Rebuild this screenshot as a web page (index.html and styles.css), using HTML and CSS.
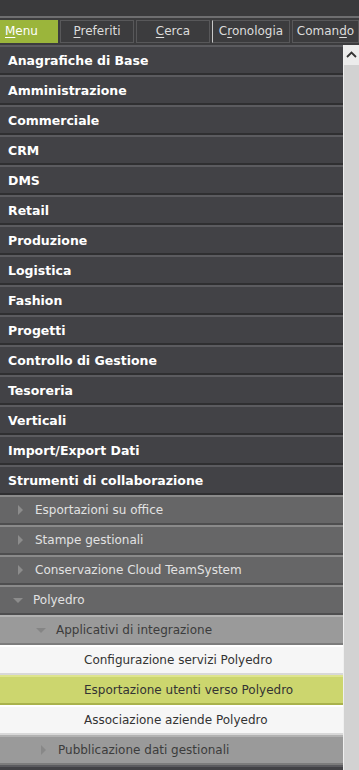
FILE: index.html
```html
<!DOCTYPE html>
<html lang="it">
<head>
  <meta charset="UTF-8" />
  <meta name="viewport" content="width=device-width, initial-scale=1.0"/>
  <title>Menu</title>
  <link rel="stylesheet" href="styles.css">
</head>
<body>
  <div class="top-bar"></div>

  <nav class="tabs">
    <div class="tab active"><u>M</u>enu</div>
    <div class="tab"><u>P</u>referiti</div>
    <div class="tab"><u>C</u>erca</div>
    <div class="tab current">C<u>r</u>onologia</div>
    <div class="tab">Coman<u>d</u>o</div>
  </nav>

  <main class="menu-area">
    <ul class="menu">
      <li class="item">Anagrafiche di Base</li>
      <li class="item">Amministrazione</li>
      <li class="item">Commerciale</li>
      <li class="item">CRM</li>
      <li class="item">DMS</li>
      <li class="item">Retail</li>
      <li class="item">Produzione</li>
      <li class="item">Logistica</li>
      <li class="item">Fashion</li>
      <li class="item">Progetti</li>
      <li class="item">Controllo di Gestione</li>
      <li class="item">Tesoreria</li>
      <li class="item">Verticali</li>
      <li class="item">Import/Export Dati</li>
      <li class="item">Strumenti di collaborazione</li>

      <!-- level 1 -->
      <li class="sub"><span class="arrow right"></span>Esportazioni su office</li>
      <li class="sub"><span class="arrow right"></span>Stampe gestionali</li>
      <li class="sub"><span class="arrow right"></span>Conservazione Cloud TeamSystem</li>
      <li class="sub"><span class="arrow down"></span>Polyedro</li>

      <!-- level 2 -->
      <li class="sub2"><span class="arrow down"></span>Applicativi di integrazione</li>

      <!-- level 3 -->
      <li class="leaf">Configurazione servizi Polyedro</li>
      <li class="leaf selected">Esportazione utenti verso Polyedro</li>
      <li class="leaf">Associazione aziende Polyedro</li>

      <li class="sub2"><span class="arrow right"></span>Pubblicazione dati gestionali</li>
      <li class="item"></li>
    </ul>

    <div class="scrollbar">
      <div class="scroll-btn">
        <svg width="11" height="7" viewBox="0 0 11 7"><path d="M1 6 L5.5 1.5 L10 6" fill="none" stroke="#333" stroke-width="1.8"/></svg>
      </div>
    </div>
  </main>
</body>
</html>
```

FILE: styles.css
```css
* { margin: 0; padding: 0; box-sizing: border-box; }

body {
  font-family: 'DejaVu Sans', Verdana, sans-serif;
  background-color: #3c3c3e;
  width: 359px;
  height: 770px;
  overflow: hidden;
}

.top-bar {
  height: 18px;
  background-color: #3a3a3c;
  border-bottom: 2px solid #6e6e70;
}

.tabs {
  display: flex;
  gap: 2px;
  height: 27px;
  padding-top: 2px;
  border-bottom: 2px solid #3c3c3e;
  background-color: #3c3c3e;
}

.tab {
  height: 23px;
  line-height: 21px;
  font-size: 12px;
  color: #dcdcdc;
  border: 1px solid #58585a;
  text-align: center;
  width: 74px;
}

.tab u { text-underline-offset: 2px; }

.tab.active {
  width: 58px;
  background-color: #9bb53b;
  border-color: #9bb53b;
  color: #fff;
  text-align: left;
  padding-left: 4px;
}

.tab.current {
  width: 78px;
  border-left-color: #c8c8c8;
}

.tab:last-child { flex: 1; }

.menu-area {
  display: flex;
  height: 725px;
  overflow: hidden;
}

.menu {
  list-style: none;
  flex: 1;
}

.menu li {
  height: 30px;
  display: flex;
  align-items: center;
  white-space: nowrap;
}

.item {
  background-color: #424246;
  border-top: 2px solid #5b5b5f;
  border-bottom: 2px solid #2f2f31;
  color: #fff;
  font-weight: bold;
  font-size: 12.5px;
  padding-left: 8px;
}

.sub {
  background-color: #666667;
  border-top: 2px solid #8a8a8a;
  border-bottom: 2px solid #4e4e4f;
  color: #e2e2e2;
  font-size: 12px;
  padding-left: 15px;
}

.sub2 {
  background-color: #9a9a9a;
  border-top: 2px solid #b2b2b2;
  border-bottom: 2px solid #7c7c7c;
  color: #3c3c3c;
  font-size: 12px;
  padding-left: 38px;
}

.leaf {
  background-color: #f6f6f6;
  border-top: 2px solid #fff;
  border-bottom: 2px solid #d8d8d8;
  color: #333;
  font-size: 12px;
  padding-left: 84px;
}

.leaf.selected {
  background-color: #ccd66e;
  border-top-color: #dde48e;
  border-bottom-color: #a9b24c;
}

.arrow {
  display: inline-block;
  width: 0;
  height: 0;
  margin-right: 12px;
}

.arrow.right {
  border-top: 5px solid transparent;
  border-bottom: 5px solid transparent;
  border-left: 5px solid #8c8c8c;
  margin-left: 3px;
  margin-right: 12px;
}

.sub2 .arrow.right { border-left-color: #888; }

.arrow.down {
  border-left: 5px solid transparent;
  border-right: 5px solid transparent;
  border-top: 5px solid #8c8c8c;
  margin-left: -2px;
  margin-right: 10px;
}

.sub2 .arrow.down { border-top-color: #858585; }

.scrollbar {
  width: 16px;
  background-color: #d2d2d2;
  border-left: 1px solid #f0f0f0;
}

.scroll-btn {
  height: 20px;
  background-color: #ececec;
  display: flex;
  justify-content: center;
  padding-top: 6px;
}
```
